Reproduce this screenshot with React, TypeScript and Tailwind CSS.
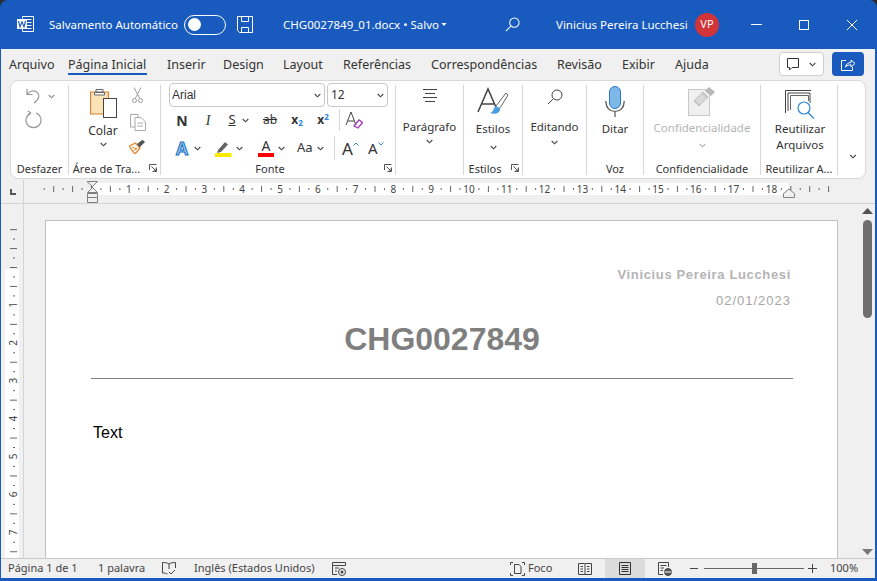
import type { ReactNode } from 'react';

const ui = { fontFamily: '"Noto Sans", sans-serif' };

function Chev({ className = '', w = 7 }: { className?: string; w?: number }) {
  return (
    <svg width={w} height={5} viewBox="0 0 7 5" className={className} fill="none" stroke="#444" strokeWidth="1.1">
      <path d="M.7 1 3.5 3.8 6.3 1" />
    </svg>
  );
}

function Launcher() {
  return (
    <svg width="8" height="8" viewBox="0 0 8 8" className="absolute right-[3px] top-[3px]" fill="none" stroke="#555" strokeWidth="1">
      <path d="M.5 6V.5H7.5M7.5 3.5V7.5H3.5M2.5 2.5 7 7M4.5 7H7V4.5" />
    </svg>
  );
}

function Group({ label, width, children, last, launcher }: { label?: string; width: string; children: ReactNode; last?: boolean; launcher?: boolean }) {
  return (
    <div className={`flex flex-col h-[90px] mt-[4px] shrink-0 ${width} ${last ? '' : 'border-r border-[#d6d6d6]'}`}>
      <div className="flex-1 min-h-0">{children}</div>
      <div className={`h-[14px] relative flex items-center justify-center text-[11px] text-[#333] whitespace-nowrap leading-none ${launcher ? 'pr-[16px]' : ''}`}>
        {label}
        {launcher && <Launcher />}
      </div>
    </div>
  );
}

function Ruler() {
  const ticks = [];
  for (let i = -5; i < 79; i++) {
    const x = 91 + (i * 37.8) / 4 - 24;
    if (i % 4 === 0 && i > 0 && i < 76) {
      ticks.push(<text key={i} x={x} y={193} textAnchor="middle" fontSize="10" fill="#444" fontFamily="Noto Sans">{i / 4}</text>);
    } else if (i % 2 === 0) {
      ticks.push(<line key={i} x1={x + 0.5} x2={x + 0.5} y1={186} y2={192} stroke="#666" />);
    } else {
      ticks.push(<rect key={i} x={x} y={188} width="1" height="2" fill="#666" />);
    }
  }
  return (
    <svg width="852" height="24" viewBox="0 180 852 24" className="block shrink-0">
      <rect x="67" y="183" width="697" height="12" fill="#fff" />
      {ticks}
      <path d="M63 181.500H73.500L68.500 186.500V187.500L73.500 192.500H63.500L68.500 187.500V186.500Z" fill="#f0f0f0" stroke="#808080" />
      <path d="M63.500 193.500H73.500V202.500H63.500ZM63.500 197.500H73.500" fill="#f0f0f0" stroke="#808080" />
      <path d="M759.500 197.500V193.500L765 189 770.500 193.500V197.500Z" fill="#f0f0f0" stroke="#808080" />
    </svg>
  );
}

function VRuler() {
  const items = [];
  for (let i = -4; i < 31; i++) {
    const y = 267 + (i * 37.9) / 4 - 204;
    if (i % 4 === 0 && i > 0) {
      items.push(<text key={i} transform={`translate(15.500 ${y}) rotate(-90)`} textAnchor="middle" fontSize="10" fill="#444" fontFamily="Noto Sans">{i / 4}</text>);
    } else if (i % 2 === 0) {
      items.push(<line key={i} x1={9} x2={16} y1={y + 0.5} y2={y + 0.5} stroke="#666" />);
    } else {
      items.push(<rect key={i} x={12} y={y} width="2" height="1" fill="#666" />);
    }
  }
  return (
    <svg width="23" height="354" viewBox="0 0 23 354" className="block">
      <rect x="4" y="65" width="14" height="300" fill="#fff" />
      {items}
    </svg>
  );
}

export default function App() {
  return (
    <div className="w-[877px] h-[581px] bg-[#2c2c2c] overflow-hidden" style={ui}>
      <div className="w-full h-full flex flex-col rounded-t-[8px] overflow-hidden bg-[#185abd] pl-[1px] pr-[2px] pb-[3px]">
        {/* title bar */}
        <div className="h-[49px] shrink-0 flex items-center text-white text-[11.500px] relative">
          <svg width="17" height="17" viewBox="0 0 17 17" className="ml-[16px] mb-[1px]" fill="none" stroke="#fff">
            <path d="M5.500 2.500V.5H16.500V15.500H5.500V13" />
            <path d="M8 3.500H14.500M8 6.500H14.500M8 9.500H14.500M8 12.500H14.500" />
            <rect x="0" y="3" width="10" height="10" fill="#fff" stroke="none" />
            <path d="M1.500 5 3 11 5 5.800 7 11 8.500 5" stroke="#185abd" strokeWidth="1.100" />
          </svg>
          <span className="ml-[15px] whitespace-nowrap w-[135px]">Salvamento Automático</span>
          <div className="w-[42px] h-[20px] rounded-full border border-white flex items-center pl-[3px]">
            <div className="w-[13px] h-[13px] rounded-full bg-white" />
          </div>
          <svg width="16" height="17" viewBox="0 0 16 17" className="ml-[11px]" fill="none" stroke="#fff">
            <path d="M.5.5H15.500V16.500H2.500L.5 14.500Z" />
            <path d="M4.500.5V5.500H11.500V.5M4.500 16.500V11.500H11.500V16.500" />
          </svg>
          <span className="ml-[30px] whitespace-nowrap w-[158px]">CHG0027849_01.docx • Salvo</span>
          <svg width="6" height="3" viewBox="0 0 7 4" fill="#fff"><path d="M0 0H7L3.500 4Z" /></svg>
          <svg width="15" height="15" viewBox="0 0 16 16" className="ml-[58px]" fill="none" stroke="#fff" strokeWidth="1.100">
            <circle cx="10" cy="6" r="5" /><path d="M6.400 9.600 1 15" />
          </svg>
          <span className="ml-[36px] whitespace-nowrap w-[139px]">Vinicius Pereira Lucchesi</span>
          <div className="w-[24px] h-[24px] rounded-full bg-[#d13438] flex items-center justify-center text-[11px]">VP</div>
          <svg width="11" height="1" viewBox="0 0 11 1" className="ml-[32px]"><rect width="11" height="1" fill="#fff" /></svg>
          <svg width="10" height="10" viewBox="0 0 10 10" className="ml-[37px]" fill="none" stroke="#fff"><rect x=".5" y=".5" width="9" height="9" /></svg>
          <svg width="10" height="10" viewBox="0 0 10 10" className="ml-[38px]" fill="none" stroke="#fff"><path d="M0 0 10 10M10 0 0 10" /></svg>
        </div>

        <div className="flex-1 min-h-0 bg-[#f0f0f0] flex flex-col">
          {/* tabs */}
          <div className="h-[31px] shrink-0 flex items-start text-[12.500px] text-[#333] pl-[8px] pr-[11px] relative">
            {[
              ['Arquivo', 'w-[59px]'],
              ['Página Inicial', 'w-[99px]'],
              ['Inserir', 'w-[56px]'],
              ['Design', 'w-[60px]'],
              ['Layout', 'w-[60px]'],
              ['Referências', 'w-[88px]'],
              ['Correspondências', 'w-[126px]'],
              ['Revisão', 'w-[65px]'],
              ['Exibir', 'w-[53px]'],
              ['Ajuda', 'w-[50px]'],
            ].map(([t, w]) => (
              <div key={t} className={`${w} shrink-0 pt-[7px] h-full relative whitespace-nowrap leading-[17px]`}>
                {t}
                {t === 'Página Inicial' && <div className="absolute left-0 w-[79px] top-[24px] h-[2px] bg-[#185abd]" />}
              </div>
            ))}
            <div className="ml-auto mt-[3px] w-[45px] h-[24px] rounded-[4px] bg-white border border-[#d0d0d0] flex items-center pl-[7px] gap-[9px] shrink-0">
              <svg width="12" height="13" viewBox="0 0 12 13" fill="none" stroke="#333"><path d="M.5.5H11.500V9.500H5L2.500 12V9.500H.5Z" /></svg>
              <Chev w={9} />
            </div>
            <div className="ml-[8px] mt-[3px] w-[32px] h-[24px] rounded-[4px] bg-[#185abd] flex items-center justify-center shrink-0">
              <svg width="15" height="13" viewBox="0 0 15 13" fill="none" stroke="#fff"><path d="M5 2.500H.5V12.500H11.500V9M4.500 9C5 6 7.500 4.500 10 4.500V2L14 5.500 10 9V6.800C8 6.800 6 7.500 4.500 9Z" /></svg>
            </div>
          </div>

          {/* ribbon */}
          <div className="h-[99px] shrink-0 mx-[9px] bg-white border border-[#d8d8d8] rounded-[8px] flex text-[#333] text-[11px]">
            <Group label="Desfazer" width="w-[58px]">
              <div className="flex items-center pl-[15px] pt-[3px] gap-[7px]">
                <svg width="15" height="16" viewBox="0 0 15 16" fill="none" stroke="#999" strokeWidth="1.200"><path d="M1 1V6.500H6.500M1.500 6C3.500 2.800 8 1.800 11 4.200 13.800 6.500 14 10.500 8 15" /></svg>
                <Chev className="opacity-60" />
              </div>
              <svg width="17" height="19" viewBox="0 0 17 18" className="ml-[14px] mt-[6px]" fill="none" stroke="#999" strokeWidth="1.200"><path d="M6 2.500A7.500 7.500 0 1 0 11 2.500M6 2.500 2.800 .5M6 2.500 3 5" /></svg>
            </Group>

            <Group label="Área de Tra..." width="w-[92px]" launcher>
              <div className="flex pl-[15px] pt-[3px]">
                <div className="w-[38px] flex flex-col items-center">
                  <svg width="27" height="30" viewBox="0 0 27 30" fill="none">
                    <path d="M.5 4H18.500V26H.5Z" fill="#fbe3b8" stroke="#d9822b" strokeWidth="1.200" />
                    <path d="M6 4H13V1.500H6Z M4.500 4.500H14.500V7H4.500Z" fill="#fff" stroke="#666" />
                    <rect x="13.500" y="10.500" width="13" height="19" fill="#fff" stroke="#444" />
                  </svg>
                  <span className="text-[12px] leading-[16px] mt-[5px]">Colar</span>
                  <Chev className="mt-[3px]" />
                </div>
                <div className="ml-[7px] flex flex-col items-center gap-[8px] -mt-[1px]">
                  <svg width="11" height="17" viewBox="0 0 11 17" className="mb-[2px]" fill="none" stroke="#999"><path d="M2 .5 7.500 11M9 .5 3.500 11" /><circle cx="2.500" cy="13.500" r="2" /><circle cx="8.500" cy="13.500" r="2" /></svg>
                  <svg width="16" height="17" viewBox="0 0 16 17" fill="none" stroke="#aaa"><path d="M.5.5H8V13H.5Z" /><path d="M5 3.500H11L15.500 8V16.500H5Z" fill="#fff" /><path d="M7.500 9H13M7.500 12H13" /></svg>
                  <svg width="17" height="15" viewBox="0 0 17 15"><path d="M.5 7 6.500 4 11 9 6.500 14.500C4.500 14 2.500 11 .5 7Z" fill="#fff" stroke="#e8862a" strokeWidth="1.300" /><path d="M3 8 8 10M5 11.500 8.500 9" stroke="#e8862a" /><path d="M8 5 13.500 .8 16 3 10.500 8.500Z" fill="#555" /></svg>
                </div>
              </div>
            </Group>

            <Group label="Fonte" width="w-[235px]" launcher>
              <div className="pl-[8px]">
                <div className="flex gap-[2px] h-[24px] -mt-[2px] text-[12px] text-[#333]">
                  <div className="w-[156px] border border-[#c8c8c8] rounded-[4px] flex items-center justify-between px-[2px] pr-[3px]" style={{ fontFamily: '"Liberation Sans"' }}>Arial<Chev /></div>
                  <div className="w-[61px] border border-[#c8c8c8] rounded-[4px] flex items-center justify-between px-[3px]">12<Chev /></div>
                </div>
                <div className="flex items-center h-[24px] mt-[1px] text-[13px]">
                  <span className="w-[26px] text-center font-bold text-[14px]">N</span>
                  <span className="w-[26px] text-center italic text-[14px]" style={{ fontFamily: '"Liberation Serif"' }}>I</span>
                  <span className="w-[18px] ml-[2px] text-center underline">S</span>
                  <Chev className="ml-[1px]" />
                  <span className="w-[30px] ml-[6px] text-center line-through text-[12px]">ab</span>
                  <span className="w-[24px] text-center font-bold text-[12px]">x<sub className="text-[8px] text-[#2b88d8]">2</sub></span>
                  <span className="w-[28px] text-center font-bold text-[12px]">x<sup className="text-[8px] text-[#2b88d8]">2</sup></span>
                  <div className="h-[22px] w-[1px] bg-[#d6d6d6] ml-[2px]" />
                  <svg width="18" height="18" viewBox="0 0 18 18" className="ml-[5px]" fill="none"><path d="M1 14 6 1 11 14M2.800 10H9" stroke="#444" /><path d="M9 15 14 9 17.500 11.500 13 17Z" stroke="#a23cb4" strokeWidth="1.300" /></svg>
                </div>
                <div className="flex items-center h-[24px] mt-[4px] text-[14px]">
                  <svg width="18" height="18" viewBox="0 0 18 18" className="ml-[4px]"><text x="9" y="15.500" textAnchor="middle" fontSize="18" fontWeight="bold" fontFamily="Liberation Sans" fill="#9cc8ee" stroke="#1670c0" strokeWidth="1">A</text></svg>
                  <Chev className="ml-[3px]" />
                  <svg width="17" height="17" viewBox="0 0 17 17" className="ml-[14px]"><path d="M3 10 10 2 13 4.500 6 12 2 13Z" fill="#666" /><rect y="13" width="16.500" height="4" fill="#ffeb00" /></svg>
                  <Chev className="ml-[4px]" />
                  <div className="ml-[15px] w-[16px] flex flex-col items-center leading-none">
                    <span className="text-[14px] leading-[13px]">A</span>
                    <div className="w-[16px] h-[4px] bg-[#ff0000] mt-[1px]" />
                  </div>
                  <Chev className="ml-[4px]" />
                  <span className="ml-[12px] text-[13px] w-[18px]">Aa</span>
                  <Chev className="ml-[2px]" />
                  <div className="h-[24px] w-[1px] bg-[#d6d6d6] ml-[10px]" />
                  <span className="ml-[7px] text-[17px] leading-none">A</span>
                  <svg width="6" height="4" viewBox="0 0 6 4" className="mb-[8px]" fill="none" stroke="#2b88d8"><path d="M.5 3.500 3 1 5.500 3.500" /></svg>
                  <span className="ml-[9px] text-[15px] leading-none">A</span>
                  <svg width="6" height="4" viewBox="0 0 6 4" className="mb-[8px] ml-[1px]" fill="none" stroke="#2b88d8"><path d="M.5.5 3 3 5.500.5" /></svg>
                </div>
              </div>
            </Group>

            <Group label="" width="w-[68px]">
              <div className="flex flex-col items-center pt-[4px]">
                <svg width="14" height="13" viewBox="0 0 14 13" stroke="#444"><path d="M0 .5H14M2 4.500H12M0 8.500H14M2 12.500H12" /></svg>
                <span className="text-[11.500px] leading-[16px] mt-[17px]">Parágrafo</span>
                <Chev className="mt-[4px]" />
              </div>
            </Group>

            <Group label="Estilos" width="w-[59px]" launcher>
              <div className="flex flex-col items-center pt-[1px]">
                <svg width="32" height="30" viewBox="0 0 32 30" fill="none">
                  <path d="M1 26 11 3 21 26M4.500 18H17" stroke="#444" strokeWidth="1.500" />
                  <path d="M19 20 29 7 31 9 23 22" fill="#fff" stroke="#666" />
                  <path d="M19 20C16 22 17 26 13 27 18 29 24 27 23 22Z" fill="#4a9ee0" />
                </svg>
                <span className="text-[11.500px] leading-[16px] mt-[5px]">Estilos</span>
                <Chev className="mt-[8px]" />
              </div>
            </Group>

            <Group label="" width="w-[64px]">
              <div className="flex flex-col items-center pt-[4px]">
                <svg width="16" height="16" viewBox="0 0 16 16" fill="none" stroke="#444"><circle cx="10" cy="6" r="5" /><path d="M6.400 9.600 1 15" /></svg>
                <span className="text-[11.500px] leading-[16px] mt-[14px]">Editando</span>
                <Chev className="mt-[5px]" />
              </div>
            </Group>

            <Group label="Voz" width="w-[57px]">
              <div className="flex flex-col items-center pt-[1px]">
                <svg width="20" height="32" viewBox="0 0 20 32" fill="none">
                  <rect x="4.500" y=".5" width="11" height="22" rx="5.500" fill="#7db8e8" stroke="#2b78c8" />
                  <path d="M.8 15C.8 22 5 25.500 10 25.500 15 25.500 19.200 22 19.200 15M10 25.500V31" stroke="#555" strokeWidth="1.200" />
                </svg>
                <span className="text-[11.500px] leading-[16px] mt-[3px]">Ditar</span>
              </div>
            </Group>

            <Group label="Confidencialidade" width="w-[117px]">
              <div className="flex flex-col items-center pt-[1px]">
                <svg width="28" height="30" viewBox="0 0 28 30" fill="none">
                  <rect x=".5" y="3.500" width="21" height="26" fill="#f0f0f0" stroke="#c8c8c8" />
                  <path d="M6 15 15 6 20 11 11 20Z" fill="#d0d0d0" stroke="#bbb" />
                  <path d="M8.500 13 13 17.500M10.500 11 15 15.500M12.500 9 17 13.500" stroke="#f4f4f4" />
                  <path d="M17 5 21 1 27 6 23 10Z" fill="#b8b8b8" />
                </svg>
                <span className="text-[11.500px] leading-[16px] mt-[4px] text-[#b4b4b4]">Confidencialidade</span>
                <Chev className="mt-[7px] opacity-40" />
              </div>
            </Group>

            <Group label="Reutilizar A..." width="w-[77px]">
              <div className="flex flex-col items-center pt-[5px] pl-[2px]">
                <svg width="30" height="29" viewBox="0 0 30 29" fill="none">
                  <path d="M.5 23V.5H26" stroke="#444" />
                  <path d="M3 21V3H25V13" stroke="#444" />
                  <path d="M5.500 20V5.500H23.500V11" stroke="#666" />
                  <circle cx="19" cy="18" r="6" fill="#fff" stroke="#2b88d8" strokeWidth="1.200" />
                  <path d="M23 22.500 29 28.500" stroke="#2b88d8" strokeWidth="1.200" />
                </svg>
                <span className="text-[11.500px] leading-[16px] mt-[2px] text-center">Reutilizar<br />Arquivos</span>
              </div>
            </Group>

            <Group label="" width="w-[29px]" last>
              <div className="h-full flex items-end justify-center pb-[2px]"><Chev w={10} /></div>
            </Group>
          </div>

          {/* ruler */}
          <div className="h-[24px] shrink-0 mt-[1px] flex border-b border-[#d4d4d4]">
            <div className="w-[23px] shrink-0 border-r border-[#d4d4d4] flex items-center pl-[9px]">
              <svg width="6" height="6" viewBox="0 0 6 6" fill="#555"><path d="M0 0H2V4H6V6H0Z" /></svg>
            </div>
            <Ruler />
          </div>

          {/* document area */}
          <div className="flex-1 min-h-0 flex">
            <div className="w-[23px] shrink-0 border-r border-[#d4d4d4] overflow-hidden"><VRuler /></div>
            <div className="w-[21px] shrink-0" />
            <div className="w-[793px] shrink-0 mt-[16px] bg-white border-x border-t border-[#c0c0c0] pt-[45px] pl-[45px] pr-[44px]" style={{ fontFamily: '"Liberation Sans", sans-serif' }}>
              <div className="text-right pr-[2px] text-[13px] font-bold tracking-[.65px] leading-[18px] text-[#b4b4b4]">Vinicius Pereira Lucchesi</div>
              <div className="text-right pr-[2px] text-[13px] tracking-[1px] leading-[18px] mt-[8px] text-[#a6a6a6]">02/01/2023</div>
              <div className="text-center text-[32px] font-bold leading-[38px] text-[#7f7f7f] mt-[10px]">CHG0027849</div>
              <div className="h-[1px] bg-[#808080] mt-[20px]" />
              <div className="text-[16px] leading-[18px] text-black mt-[45px] pl-[2px]">Text</div>
            </div>
            <div className="flex-1 flex flex-col items-center relative pl-[21px]">
              <svg width="11" height="6" viewBox="0 0 11 6" className="mt-[4px] shrink-0" fill="#555"><path d="M5.500 0 11 6H0Z" /></svg>
              <div className="w-[9px] h-[98px] rounded-full bg-[#6e6e6e] mt-[6px] shrink-0" />
              <svg width="11" height="6" viewBox="0 0 11 6" className="mt-auto mb-[3px] shrink-0" fill="#777"><path d="M0 0H11L5.500 6Z" /></svg>
            </div>
          </div>

          {/* status bar */}
          <div className="h-[20px] shrink-0 border-t border-[#c8c8c8] flex items-center text-[11px] text-[#444] whitespace-nowrap pl-[7px]">
            <span className="w-[90px]">Página 1 de 1</span>
            <span className="w-[64px]">1 palavra</span>
            <svg width="14" height="13" viewBox="0 0 14 13" fill="none" stroke="#444"><path d="M7 2C5.500.8 3 .5.5.5V11C3 11 4.500 11.500 5.500 12M7 2C8.500.8 11 .5 13.500.5V6M7 2V7M7 10 9 12 13 8" /></svg>
            <span className="ml-[18px] w-[138px]">Inglês (Estados Unidos)</span>
            <svg width="14" height="14" viewBox="0 0 14 14" fill="none" stroke="#444"><path d="M.5.5H13.500V3.500H.5ZM.5 3.500V12.500H5M3 6H7M3 9H5" /><circle cx="10" cy="10" r="3.500" /><circle cx="10" cy="10" r="1.500" fill="#444" stroke="none" /></svg>
            <svg width="15" height="14" viewBox="0 0 15 14" className="ml-[164px]" fill="none" stroke="#444"><path d="M.5 3V.5H3M12 .5H14.500V3M.5 11V13.500H3M12 13.500H14.500V11" /><path d="M4.500 11.500V2.500H9L11 4.500V11.500Z" /></svg>
            <span className="ml-[3px] w-[50px] text-[11px]">Foco</span>
            <svg width="14" height="12" viewBox="0 0 14 12" fill="none" stroke="#444"><path d="M.5.5H6.500C7 .5 7 1 7 1 7 1 7 .5 7.500.5H13.500V11.500H.5ZM7 1V11.500M2.500 3.500H5M2.500 6H5M2.500 8.500H5M9 3.500H11.500M9 6H11.500M9 8.500H11.500" /></svg>
            <div className="ml-[13px] w-[40px] h-full bg-[#dcdcdc] flex items-center justify-center">
              <svg width="12" height="13" viewBox="0 0 12 13" fill="none" stroke="#333"><path d="M.5.5H11.500V12.500H.5ZM2.500 3.500H9.500M2.500 5.500H9.500M2.500 7.500H9.500M2.500 9.500H9.500" /></svg>
            </div>
            <svg width="14" height="14" viewBox="0 0 14 14" className="ml-[13px]" fill="none" stroke="#444"><path d="M5 12.500H.5V.5H10.500V5M2.500 3.500H8.500M2.500 6H6M2.500 8.500H5" /><circle cx="10" cy="10" r="3.500" fill="#555" /><path d="M6.500 10H13.500" stroke="#fff" /></svg>
            <div className="ml-[18px] w-[8px] h-[1px] bg-[#444]" />
            <div className="ml-[6px] w-[100px] h-[1px] bg-[#666] relative">
              <div className="absolute left-[48px] top-[-5px] w-[5px] h-[11px] bg-[#666]" />
            </div>
            <svg width="9" height="9" viewBox="0 0 9 9" className="ml-[4px]" stroke="#444"><path d="M0 4.500H9M4.500 0V9" /></svg>
            <span className="ml-[13px]">100%</span>
          </div>
        </div>
      </div>
    </div>
  );
}
